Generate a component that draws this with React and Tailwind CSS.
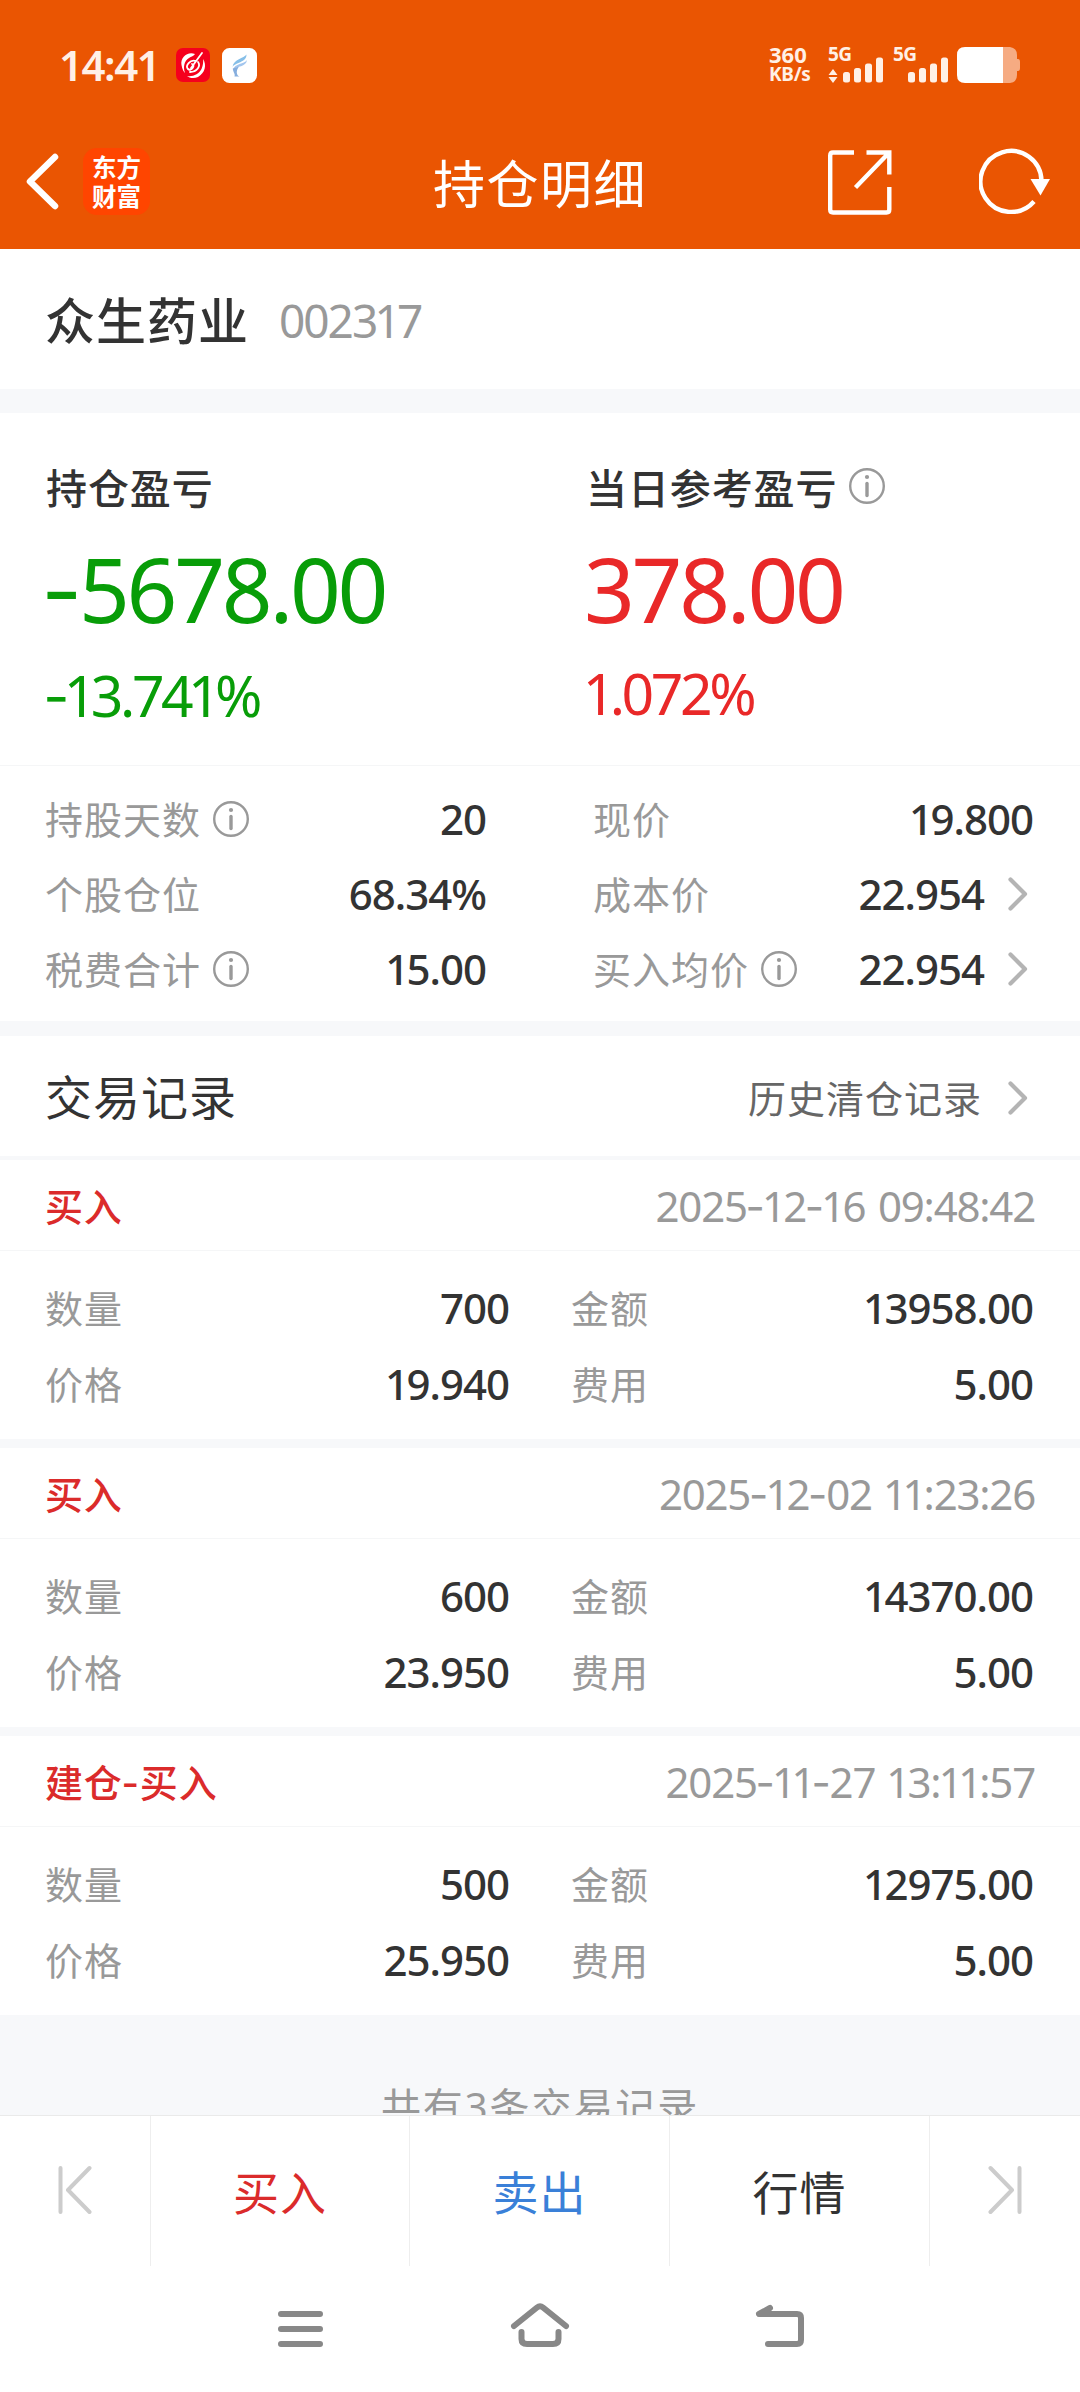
import React from "react";

const stats = [
  { label: "持股天数", value: "20", info: true },
  { label: "现价", value: "19.800" },
  { label: "个股仓位", value: "68.34%" },
  { label: "成本价", value: "22.954", arrow: true },
  { label: "税费合计", value: "15.00", info: true },
  { label: "买入均价", value: "22.954", info: true, arrow: true },
];

const records = [
  {
    type: "买入",
    time: "2025-12-16 09:48:42",
    count: "700",
    amount: "13958.00",
    price: "19.940",
    fee: "5.00",
  },
  {
    type: "买入",
    time: "2025-12-02 11:23:26",
    count: "600",
    amount: "14370.00",
    price: "23.950",
    fee: "5.00",
  },
  {
    type: "建仓-买入",
    time: "2025-11-27 13:11:57",
    count: "500",
    amount: "12975.00",
    price: "25.950",
    fee: "5.00",
  },
];

// Figures with a wider dash and a narrower "1"
const Num = ({ children }) =>
  children.split(/([-1])/).map((part, i) => {
    if (part === "-") {
      return (
        <span key={i} className="-ml-[0.03em] font-['Inter']">
          -
        </span>
      );
    }
    if (part === "1") {
      return (
        <span key={i} className="-mx-[0.04em]">
          1
        </span>
      );
    }
    return part;
  });

const InfoIcon = () => (
  <svg width="36" height="36" viewBox="0 0 36 36" fill="none">
    <circle cx="18" cy="18" r="16.8" stroke="#999" strokeWidth="2.4" />
    <circle cx="18" cy="9" r="2.1" fill="#999" />
    <path d="M18 15.5V27.5" stroke="#999" strokeWidth="3.4" strokeLinecap="round" />
  </svg>
);

const ArrowRight = () => (
  <svg width="20" height="34" viewBox="0 0 20 34" fill="none">
    <path
      d="M2.5 2.5L17 17L2.5 31.5"
      stroke="#b4b4b4"
      strokeWidth="4.2"
      strokeLinecap="round"
      strokeLinejoin="round"
    />
  </svg>
);

const Signal = () => (
  <svg width="41" height="26" viewBox="0 0 41 26" fill="#fff0e6">
    <rect x="0" y="15" width="7" height="10.5" rx="2.5" />
    <rect x="11" y="11" width="7" height="14.5" rx="2.5" />
    <rect x="22" y="6.5" width="7" height="19" rx="2.5" />
    <rect x="33" y="0.5" width="7" height="25" rx="2.5" />
  </svg>
);

const StatusBar = () => (
  <div className="flex h-[130px] items-center pl-[59px] pr-[59px] text-[#fff0e6]">
    <span className="w-[117px] text-[42px] font-semibold leading-none tracking-[-1.5px]">
      14:41
    </span>
    <svg width="34" height="34" viewBox="0 0 34 34" fill="none">
      <rect width="34" height="34" rx="7" fill="#f5001d" />
      <path
        d="M19 6C12 3 4 9 5.5 17C6 21 8 24 9 25C7 19 8 13 13 10C15 8.5 18 8 19 6Z"
        fill="#fff"
      />
      <path
        d="M27 11C31 17 29 25 22 29C18 31 13 30 11 28C17 29 23 26 25.5 21C27 17 27.5 14 27 11Z"
        fill="#fff"
      />
      <path
        d="M26 5L15 20M20 13C14 11 9 18 12 21C15 24 20 17 16 16M22 14C25 18 21 24 14 24"
        stroke="#fff"
        strokeWidth="1.8"
        strokeLinecap="round"
      />
    </svg>
    <svg className="ml-3" width="35" height="35" viewBox="0 0 35 35" fill="none">
      <rect width="35" height="35" rx="7.5" fill="#fff" />
      <path d="M24.5 6.5C22 10.500 11.5 11 10.5 19C14 14 24.500 14.500 24.5 6.5Z" fill="#86bfe8" />
      <path d="M25 12C22 16.500 13 15 10.8 22C15 17.500 24 19.500 25 12Z" fill="#a3c6ee" />
      <path
        d="M10.800 20.500C11 24.500 13.500 25.500 12.500 28.500H17.500C14.500 27.500 13.5 23 17 18.5Z"
        fill="#86aede"
      />
    </svg>

    <div className="ml-auto flex h-9 items-end">
      <div className="-mt-0.5 flex w-[59px] flex-col self-center font-bold">
        <span className="text-[22px] leading-[20px]">360</span>
        <span className="text-[19px] leading-[20px] tracking-[-0.3px]">KB/s</span>
      </div>
      <div className="flex w-[65px] items-end">
        <div className="-mr-[23px] flex h-9 w-[38px] flex-col justify-between">
          <span className="text-[19px] font-bold leading-[14px] tracking-[-0.5px]">5G</span>
          <svg width="10" height="14" viewBox="0 0 10 14" fill="#fff0e6">
            <path d="M5 0L9.5 6H0.5ZM5 14L9.5 8H0.5Z" />
          </svg>
        </div>
        <Signal />
      </div>
      <div className="flex w-[64px] items-end">
        <div className="-mr-[23px] flex h-9 w-[38px] flex-col">
          <span className="text-[19px] font-bold leading-[14px] tracking-[-0.5px]">5G</span>
        </div>
        <Signal />
      </div>
      <svg width="64" height="36" viewBox="0 0 64 36">
        <path
          d="M46 0H53Q60 1 60 8V12H61Q63 12 63 15V21Q63 24 61 24H60V28Q60 35 53 36H46Z"
          fill="#f6ab82"
        />
        <path d="M8 0H46V36H8Q0 36 0 28V8Q0 0 8 0Z" fill="#fff" />
      </svg>
    </div>
  </div>
);

const TitleBar = () => (
  <div className="grid h-[119px] grid-cols-3 items-start">
    <div className="flex pl-[25px] pt-[18px]">
      <svg className="mt-[5px]" width="34" height="58" viewBox="0 0 34 58" fill="none">
        <path
          d="M30 4L5 28.5L30 53"
          stroke="#fff"
          strokeWidth="6.5"
          strokeLinecap="round"
          strokeLinejoin="round"
        />
      </svg>
      <div className="ml-6 flex h-[67px] w-[67px] flex-col items-center justify-center rounded-[14px] bg-[#ff4500] text-[24.5px] font-bold leading-[29px] text-white">
        <span>东方</span>
        <span>财富</span>
      </div>
    </div>
    <h1 className="pt-[28px] text-center text-[52px] leading-none tracking-[1.5px] text-white">
      持仓明细
    </h1>
    <div className="flex justify-end gap-[87px] pr-[28px] pt-[18px]">
      <svg
        className="mt-0.5"
        width="64"
        height="65"
        viewBox="0 0 64 65"
        fill="none"
        stroke="#fff"
        strokeWidth="4.4"
      >
        <path d="M26 2.5H5Q2.2 2.5 2.2 5.5V59.5Q2.2 62.5 5 62.5H58.5Q61.3 62.5 61.3 59.5V37" />
        <path d="M38.5 2.5H61.3V24.5M61 2.8L27.5 37.5" />
      </svg>
      <svg width="73" height="66" viewBox="0 0 73 66" fill="none">
        <path
          d="M55 53.5A30.5 30.5 0 1 1 62.5 33"
          stroke="#fff"
          strokeWidth="4.4"
        />
        <path d="M51.5 31H71L61.5 47.5Z" fill="#fff" />
      </svg>
    </div>
  </div>
);

const Profit = ({ title, amount, percent, info, color }) => (
  <div className="flex flex-1 flex-col pl-[46px]">
    <div className="flex h-[42px] items-center">
      <span className="text-[41px] font-medium leading-none tracking-[0.9px] text-[#333]">
        {title}
      </span>
      {info && (
        <span className="ml-3 -mt-1">
          <InfoIcon />
        </span>
      )}
    </div>
    <span className={`-ml-0.5 mt-[35px] text-[89px] leading-[90px] tracking-[-3.3px] ${color}`}>
      <Num>{amount}</Num>
    </span>
    <span className={`-ml-px mt-[30px] text-[57px] leading-[58px] tracking-[-3.4px] ${color}`}>
      <Num>{percent}</Num>
    </span>
  </div>
);

const Field = ({ label, value, info, arrow, className }) => (
  <div className={`flex items-center leading-none ${className}`}>
    <span className="text-[38px] tracking-[1px] text-[#999]">{label}</span>
    {info && (
      <span className="ml-3">
        <InfoIcon />
      </span>
    )}
    <span className="ml-auto text-[42px] font-medium tracking-[-1px] text-[#333]">
      <Num>{value}</Num>
    </span>
    {arrow && (
      <span className="ml-6 mr-[5px]">
        <ArrowRight />
      </span>
    )}
  </div>
);

const Record = ({ record }) => (
  <div className="h-[279px] bg-white">
    <div className="flex h-[91px] items-center justify-between border-b border-[#f5f6f7] pl-[45px] pr-[45px] pt-0.5 leading-none">
      <span className="text-[38px] font-medium tracking-[0.8px] text-[#db2b2b]">
        <Num>{record.type}</Num>
      </span>
      <span className="text-[42px] tracking-[-1.2px] text-[#999] [word-spacing:3px]">
        <Num>{record.time}</Num>
      </span>
    </div>
    <div className="grid grid-cols-[464px_462px] gap-x-[62px] pl-[45px] pt-[19px]">
      <Field className="h-[76px]" label="数量" value={record.count} />
      <Field className="h-[76px]" label="金额" value={record.amount} />
      <Field className="h-[76px]" label="价格" value={record.price} />
      <Field className="h-[76px]" label="费用" value={record.fee} />
    </div>
  </div>
);

const SkipIcon = ({ flip }) => (
  <svg
    className={flip ? "-scale-x-100" : ""}
    width="34"
    height="50"
    viewBox="0 0 34 50"
    fill="none"
    stroke="#ccc"
    strokeWidth="4"
    strokeLinecap="round"
    strokeLinejoin="round"
  >
    <path d="M2.5 3V47M31.5 3L10 25L31.5 47" />
  </svg>
);

const SystemNav = () => (
  <div className="flex h-[126px] items-start justify-center pl-0.5 pt-9">
    <svg
      width="48"
      height="48"
      viewBox="0 0 48 48"
      stroke="#888"
      strokeWidth="6"
      strokeLinecap="round"
    >
      <path d="M4 12H43M4 27H43M4 42H43" />
    </svg>
    <svg
      className="ml-[185px]"
      width="60"
      height="48"
      viewBox="0 0 60 48"
      fill="none"
      stroke="#888"
      strokeWidth="6"
      strokeLinecap="round"
      strokeLinejoin="round"
    >
      <path d="M4 24L27 5.5Q30 3 33 5.5L56 24" />
      <path d="M11.5 30V37Q11.5 42 17 42H43Q48.5 42 48.5 37V30" />
    </svg>
    <svg
      className="ml-[185px]"
      width="50"
      height="48"
      viewBox="0 0 50 48"
      fill="none"
      stroke="#888"
      strokeWidth="6"
      strokeLinecap="round"
      strokeLinejoin="round"
    >
      <path d="M15 6L4 12H42Q46 12 46 16V38Q46 42 42 42H13" />
    </svg>
  </div>
);

const App = () => {
  return (
    <div className="flex h-[2392px] w-[1080px] flex-col overflow-hidden bg-[#f7f8fa] font-['Noto_Sans','Noto_Sans_CJK_SC',sans-serif]">
      <header className="h-[249px] shrink-0 bg-[#ea5502]">
        <StatusBar />
        <TitleBar />
      </header>

      {/* Stock name */}
      <div className="flex h-[140px] shrink-0 items-center bg-white pl-[45px] leading-none">
        <span className="mt-1 text-[50px] font-medium tracking-[1px] text-[#333]">众生药业</span>
        <span className="ml-[30px] mt-0.5 text-[46px] tracking-[-2px] text-[#999]">
          <Num>002317</Num>
        </span>
      </div>

      {/* Profit and position */}
      <section className="mt-6 h-[608px] shrink-0 bg-white">
        <div className="flex h-[353px] border-b border-[#f5f6f7] pt-[54px]">
          <Profit title="持仓盈亏" amount="-5678.00" percent="-13.741%" color="text-[#089d08]" />
          <Profit title="当日参考盈亏" amount="378.00" percent="1.072%" color="text-[#e92828]" info />
        </div>
        <div className="grid grid-cols-[441px_440px] gap-x-[107px] pl-[45px] pt-[15px]">
          {stats.map((item) => (
            <Field key={item.label} className="h-[75px]" {...item} />
          ))}
        </div>
      </section>

      {/* Trade records */}
      <div className="mt-[15px] flex h-[120px] shrink-0 items-center justify-between bg-white pl-[45px] pr-[52px] pt-1 leading-none">
        <span className="-mt-0.5 text-[47px] tracking-[1px] text-[#333]">交易记录</span>
        <div className="flex items-center">
          <span className="text-[38px] tracking-[1px] text-[#666]">历史清仓记录</span>
          <span className="ml-[26px]">
            <ArrowRight />
          </span>
        </div>
      </div>
      <div className="mt-1 flex shrink-0 flex-col gap-[9px]">
        {records.map((record) => (
          <Record key={record.time} record={record} />
        ))}
      </div>
      <div className="h-[100px] shrink-0 overflow-hidden pt-[72px] text-center text-[40px] leading-none tracking-[1.9px] text-[#999]">
        共有3条交易记录
      </div>

      {/* Bottom actions */}
      <footer className="flex-1 bg-white">
        <div className="grid h-[151px] grid-cols-[151px_259px_260px_260px_150px] divide-x divide-[#eee] border-t border-[#eaeaea] text-[46px] leading-none tracking-[1px]">
          <div className="flex items-center justify-center pb-[3px]">
            <SkipIcon />
          </div>
          <button className="pt-0.5 text-[#db2b2b]">买入</button>
          <button className="pt-0.5 text-[#3a80d8]">卖出</button>
          <button className="pt-0.5 text-[#333]">行情</button>
          <div className="flex items-center justify-center pb-[3px]">
            <SkipIcon flip />
          </div>
        </div>
        <SystemNav />
      </footer>
    </div>
  );
};

export default App;
